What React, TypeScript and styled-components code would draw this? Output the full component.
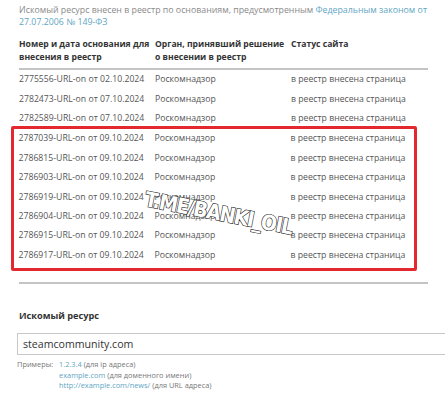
import React from "react";
import styled, { createGlobalStyle } from "styled-components";

const Global = createGlobalStyle`
  html, body { margin: 0; padding: 0; background: #fff; overflow: hidden; }
  body { font-family: "Open Sans", "Noto Sans", sans-serif; width: 445px; height: 400px; }
`;

const Page = styled.div`
  position: relative;
  width: 445px;
  height: 400px;
  padding: 4px 17px 0 19px;
  box-sizing: border-box;
  overflow: hidden;
`;

const Intro = styled.p`
  margin: 0;
  font-size: 8.8px;
  line-height: 12px;
  color: #8a8a8a;
`;

const Link = styled.a`
  color: #62a6c4;
  text-decoration: none;
`;

const Table = styled.div`
  margin-top: 10px;
  width: 409px;
`;

const Grid = styled.div`
  display: grid;
  grid-template-columns: 136px 136px 1fr;
`;

const HeadRow = styled(Grid)`
  font-weight: 700;
  font-size: 8.6px;
  line-height: 13px;
  color: #333;
  white-space: nowrap;
  padding-bottom: 3.5px;
  border-bottom: 2px solid #c4c4c4;
`;

const Row = styled(Grid)`
  height: 19.4px;
  align-items: center;
  font-size: 8.7px;
  color: #555;
  white-space: nowrap;
`;

const Highlight = styled.div`
  margin: -2px 11px 0 -8px;
  border: 3.5px solid #e4282f;
  border-radius: 2px;
  padding: 0 0 4px 4.5px;
`;

const BottomLine = styled.div`
  margin-top: 11px;
  border-bottom: 2px solid #c4c4c4;
`;

const Label = styled.div`
  margin-top: 25px;
  font-weight: 700;
  font-size: 9.2px;
  line-height: 14px;
  color: #333;
`;

const Input = styled.div`
  margin: 10px 0 0 -2px;
  width: 460px;
  height: 22px;
  box-sizing: border-box;
  border: 1px solid #c8c8c8;
  padding-left: 5px;
  display: flex;
  align-items: center;
  font-size: 10.6px;
  color: #333;
`;

const Examples = styled.div`
  margin-top: 4px;
  margin-left: -2px;
  display: grid;
  grid-template-columns: 42px auto;
  font-size: 7.4px;
  line-height: 10.3px;
  color: #777;
`;

const Watermark = styled.div`
  position: absolute;
  left: 145px;
  top: 189px;
  line-height: 21px;
  transform: rotate(11deg);
  transform-origin: left center;
  font-family: "DejaVu Sans Condensed", "DejaVu Sans", sans-serif;
  font-weight: 700;
  font-size: 21px;
  letter-spacing: -1.2px;
  color: #fff;
  -webkit-text-stroke: 1.2px #222;
  paint-order: stroke fill;
  white-space: nowrap;
`;

const rows: [string, boolean][] = [
  ["2775556-URL-on от 02.10.2024", false],
  ["2782473-URL-on от 07.10.2024", false],
  ["2782589-URL-on от 07.10.2024", false],
  ["2787039-URL-on от 09.10.2024", true],
  ["2786815-URL-on от 09.10.2024", true],
  ["2786903-URL-on от 09.10.2024", true],
  ["2786919-URL-on от 09.10.2024", true],
  ["2786904-URL-on от 09.10.2024", true],
  ["2786915-URL-on от 09.10.2024", true],
  ["2786917-URL-on от 09.10.2024", true],
];

const DataRow = ({ id }: { id: string }) => (
  <Row>
    <span>{id}</span>
    <span>Роскомнадзор</span>
    <span>в реестр внесена страница</span>
  </Row>
);

export default function App() {
  return (
    <>
      <Global />
      <Page>
        <Intro>
          Искомый ресурс внесен в реестр по основаниям, предусмотренным{" "}
          <Link>Федеральным законом от 27.07.2006 № 149-ФЗ</Link>
        </Intro>
        <Table>
          <HeadRow>
            <span>
              Номер и дата основания для
              <br />
              внесения в реестр
            </span>
            <span>
              Орган, принявший решение
              <br />о внесении в реестр
            </span>
            <span>Статус сайта</span>
          </HeadRow>
          {rows
            .filter((r) => !r[1])
            .map(([id]) => (
              <DataRow key={id} id={id} />
            ))}
          <Highlight>
            {rows
              .filter((r) => r[1])
              .map(([id]) => (
                <DataRow key={id} id={id} />
              ))}
          </Highlight>
          <BottomLine />
        </Table>
        <Label>Искомый ресурс</Label>
        <Input>steamcommunity.com</Input>
        <Examples>
          <span>Примеры:</span>
          <span>
            <Link>1.2.3.4</Link> (для ip адреса)
          </span>
          <span />
          <span>
            <Link>example.com</Link> (для доменного имени)
          </span>
          <span />
          <span>
            <Link>http://example.com/news/</Link> (для URL адреса)
          </span>
        </Examples>
        <Watermark>T.ME/BANKI_OIL</Watermark>
      </Page>
    </>
  );
}
